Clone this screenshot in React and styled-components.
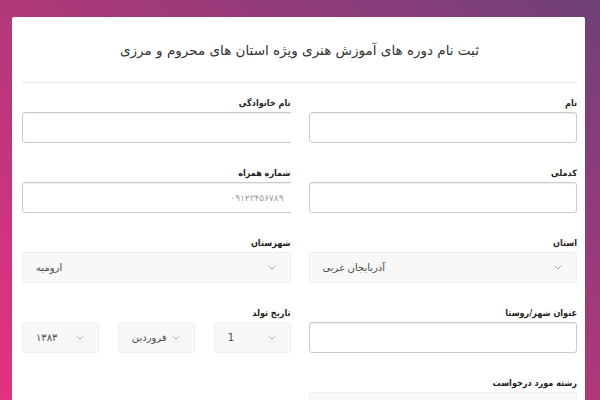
import React from "react";
import styled, { createGlobalStyle } from "styled-components";

const GlobalStyle = createGlobalStyle`
  html, body {
    margin: 0;
    padding: 0;
    height: 100%;
  }
  body {
    background: linear-gradient(to top right, #e4327f 0%, #b6377a 45%, #6f4079 100%);
    background-attachment: fixed;
    font-family: "DejaVu Sans", "Noto Sans", sans-serif;
    overflow: hidden;
  }
`;

const Page = styled.div`
  padding: 17px 15px 0 12px;
  height: 400px;
  box-sizing: border-box;
`;

const Card = styled.div`
  background: #fff;
  border-radius: 2px;
  padding: 0 8px 0 10px;
  min-height: 420px;
  direction: rtl;
`;

const Header = styled.div`
  height: 65px;
  display: flex;
  align-items: center;
  justify-content: center;
  border-bottom: 1px solid #e9e9e9;
`;

const Title = styled.h1`
  margin: 0;
  font-size: 13.5px;
  font-weight: normal;
  color: #333;
`;

const Form = styled.form`
  display: grid;
  grid-template-columns: 1fr 1fr;
  column-gap: 18px;
  padding-top: 13px;
`;

const Column = styled.div`
  display: flex;
  flex-direction: column;
  overflow: ${({ $clip }) => ($clip ? "hidden" : "visible")};
`;

const Group = styled.div`
  display: flex;
  flex-direction: column;
  margin-bottom: 23px;
`;

const Label = styled.label`
  font-family: "DejaVu Sans Condensed", "DejaVu Sans", sans-serif;
  font-size: 9px;
  font-weight: bold;
  color: #222;
  line-height: 14px;
  margin-bottom: 2px;
`;

const Input = styled.input`
  box-sizing: border-box;
  height: 31px;
  width: ${({ $bleed }) => ($bleed ? "calc(100% + 6px)" : "100%")};
  margin-right: ${({ $bleed }) => ($bleed ? "-6px" : "0")};
  border: 1px solid #cbcbcb;
  border-radius: 3px;
  box-shadow: inset 0 1px 1px rgba(0, 0, 0, 0.07);
  padding: 0 12px;
  font-family: "DejaVu Sans", sans-serif;
  font-size: 9px;
  color: #555;
  background: #fff;
  direction: rtl;
  &::placeholder {
    color: #9a9a9a;
  }
`;

const SelectBox = styled.div`
  box-sizing: border-box;
  height: 31px;
  display: flex;
  direction: ltr;
  align-items: center;
  justify-content: space-between;
  padding: 0 14px 0 13px;
  background: #f8f8f8;
  border: 1px solid #eeeeee;
  border-radius: 3px;
  font-size: 10px;
  color: #4a4a4a;
`;

const SelectText = styled.span`
  direction: rtl;
  white-space: nowrap;
`;

const DateRow = styled.div`
  display: grid;
  grid-template-columns: repeat(3, 1fr);
  column-gap: 19px;
`;

const Chevron = () => (
  <svg width="8" height="5" viewBox="0 0 8 5">
    <polyline
      points="0.5,0.5 4,4 7.5,0.5"
      fill="none"
      stroke="#a0a0a0"
      strokeWidth="0.9"
    />
  </svg>
);

function Select({ value }) {
  return (
    <SelectBox>
      <SelectText>{value}</SelectText>
      <Chevron />
    </SelectBox>
  );
}

export default function App() {
  return (
    <>
      <GlobalStyle />
      <Page>
        <Card>
          <Header>
            <Title>ثبت نام دوره های آموزش هنری ویژه استان های محروم و مرزی</Title>
          </Header>
          <Form>
            <Column>
              <Group>
                <Label>نام</Label>
                <Input />
              </Group>
              <Group>
                <Label>کدملی</Label>
                <Input />
              </Group>
              <Group>
                <Label>استان</Label>
                <Select value="آذربایجان غربی" />
              </Group>
              <Group>
                <Label>عنوان شهر/روستا</Label>
                <Input />
              </Group>
              <Group>
                <Label>رشته مورد درخواست</Label>
                <Select value="" />
              </Group>
            </Column>
            <Column $clip>
              <Group>
                <Label>نام خانوادگی</Label>
                <Input $bleed />
              </Group>
              <Group>
                <Label>شماره همراه</Label>
                <Input $bleed placeholder="۰۹۱۲۳۴۵۶۷۸۹" />
              </Group>
              <Group>
                <Label>شهرستان</Label>
                <Select value="ارومیه" />
              </Group>
              <Group>
                <Label>تاریخ تولد</Label>
                <DateRow>
                  <Select value="1" />
                  <Select value="فروردین" />
                  <Select value="۱۳۸۳" />
                </DateRow>
              </Group>
            </Column>
          </Form>
        </Card>
      </Page>
    </>
  );
}
